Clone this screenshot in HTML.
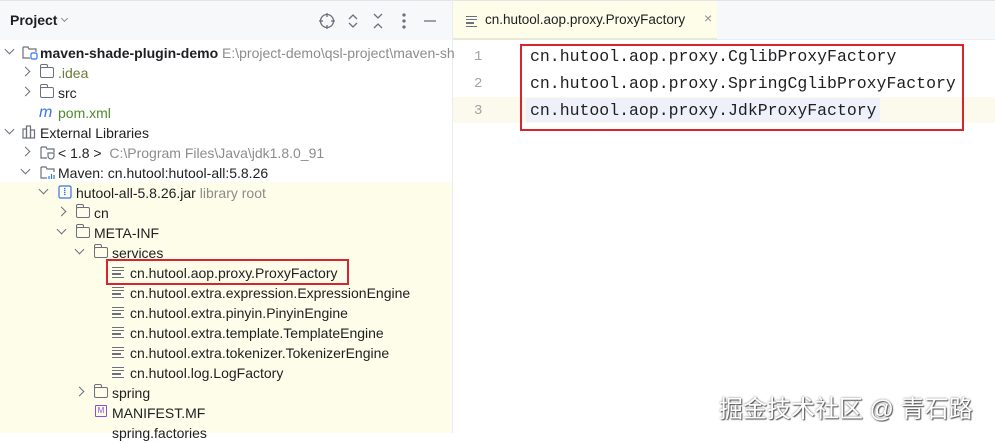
<!DOCTYPE html>
<html><head><meta charset="utf-8"><style>
*{margin:0;padding:0;box-sizing:border-box}
body{width:995px;height:433px;overflow:hidden;background:#fff;font-family:"Liberation Sans","Noto Sans CJK SC",sans-serif;font-size:14px;color:#1e1f22;position:relative}
.abs{position:absolute}
.row{position:absolute;height:20px;line-height:20px;white-space:nowrap;margin-top:1px}
.chev{position:absolute;width:7px;height:7px;border-right:1.3px solid #6c707e;border-bottom:1.3px solid #6c707e}
.cr{transform:rotate(-45deg)}
.cd{transform:rotate(45deg)}
.fold{position:absolute;width:14px;height:11px;border:1.2px solid #6c707e;border-radius:2px;top:5px}
.fold:before{content:"";position:absolute;left:-1px;top:-4px;width:6px;height:3px;border:1.2px solid #6c707e;border-bottom:none;border-radius:2px 2px 0 0}
.lines{position:absolute;width:12px;top:6px}
.lines i{display:block;height:1.2px;background:#6c707e;margin-bottom:2px}
.grey{color:#8c8c8c}
.code{font-family:"Liberation Mono","DejaVu Sans Mono",monospace;font-size:16.5px;position:absolute;left:530px;white-space:nowrap}
.ln{font-family:"Liberation Mono",monospace;font-size:14px;color:#a0a3a9;position:absolute;left:474px}
</style></head><body>
<div class="abs" style="left:0;top:0;width:452px;height:40px;background:#f7f8fa;border-top:1px solid #e4e4e4"></div>
<div class="abs" style="left:10px;top:12px;font-size:14px;font-weight:bold;color:#1e1f22">Project</div>
<div class="chev cd abs" style="left:62px;top:16px;width:5px;height:5px;border-color:#8c8c8c"></div>
<svg class="abs" style="left:316px;top:11px" width="120" height="20" fill="none" stroke="#6c707e" stroke-width="1.3">
<circle cx="11" cy="10" r="6.5"/><line x1="11" y1="2" x2="11" y2="6"/><line x1="11" y1="14" x2="11" y2="18"/><line x1="3" y1="10" x2="7" y2="10"/><line x1="15" y1="10" x2="19" y2="10"/>
<path d="M33 8l4-4 4 4M33 12l4 4 4-4"/>
<path d="M58 3l4 4 4-4M58 17l4-4 4 4"/>
<circle cx="88" cy="4" r="1" fill="#6c707e"/><circle cx="88" cy="10" r="1" fill="#6c707e"/><circle cx="88" cy="16" r="1" fill="#6c707e"/>
<line x1="108" y1="10" x2="120" y2="10"/>
</svg>
<div class="abs" style="left:0;top:182px;width:452px;height:251px;background:#fdfde9"></div>
<div class="abs" style="left:452px;top:0;width:1px;height:433px;background:#ebecf0"></div>

<div class="chev cd" style="left:6px;top:46px"></div>
<svg class="abs" style="left:22px;top:44px" width="16" height="16" fill="none" stroke="#6c707e" stroke-width="1.2"><path d="M1 3h5l1 2h7v3M1 3v11h7"/><rect x="9" y="9" width="6" height="6" rx="1.5" stroke="#3574f0"/></svg>
<div class="row" style="left:40px;top:42px"><b>maven-shade-plugin-demo</b> <span class="grey">E:\project-demo\qsl-project\maven-sh</span></div>

<div class="chev cr" style="left:22px;top:68px"></div>
<div class="fold" style="left:40px;top:67px"></div>
<div class="row" style="left:58px;top:62px;color:#6b7d38">.idea</div>
<div class="chev cr" style="left:22px;top:88px"></div>
<div class="fold" style="left:40px;top:87px"></div>
<div class="row" style="left:58px;top:82px">src</div>
<div class="row" style="left:39px;top:102px;color:#3574f0;font-style:italic;font-size:16px">m</div>
<div class="row" style="left:58px;top:102px;color:#4e8a2e">pom.xml</div>

<div class="chev cd" style="left:6px;top:126px"></div>
<svg class="abs" style="left:22px;top:125px" width="14" height="14" fill="none" stroke="#6c707e" stroke-width="1.2"><rect x="1" y="4" width="3.5" height="9"/><rect x="4.5" y="1" width="4" height="12"/><rect x="8.5" y="5" width="4" height="8"/></svg>
<div class="row" style="left:40px;top:122px">External Libraries</div>

<div class="chev cr" style="left:22px;top:148px"></div>
<svg class="abs" style="left:40px;top:144px" width="16" height="16" fill="none" stroke="#6c707e" stroke-width="1.2"><path d="M1 3h5l1 2h7v3M1 3v11h6"/><path d="M8 9h6v3a3 3 0 0 1-6 0z"/></svg>
<div class="row" style="left:58px;top:142px">&lt; 1.8 &gt; <span class="grey">&nbsp;C:\Program Files\Java\jdk1.8.0_91</span></div>

<div class="chev cd" style="left:22px;top:166px"></div>
<svg class="abs" style="left:40px;top:164px" width="16" height="16" fill="none" stroke="#6c707e" stroke-width="1.2"><path d="M1 3h5l1 2h7v3M1 3v11h6"/><path d="M9 15v-3M11.5 15v-5M14 15v-4" stroke="#3574f0"/></svg>
<div class="row" style="left:58px;top:162px">Maven: cn.hutool:hutool-all:5.8.26</div>

<div class="chev cd" style="left:40px;top:186px"></div>
<svg class="abs" style="left:58px;top:185px" width="14" height="14" fill="none" stroke="#3574f0" stroke-width="1.2"><rect x="1" y="1" width="12" height="12" rx="1.5"/><path d="M6 3.5h1.5M7.5 5.5h-1.5M6 7.5h1.5M7.5 9.5h-1.5"/></svg>
<div class="row" style="left:76px;top:182px">hutool-all-5.8.26.jar <span class="grey">library root</span></div>

<div class="chev cr" style="left:58px;top:208px"></div>
<div class="fold" style="left:76px;top:207px"></div>
<div class="row" style="left:94px;top:202px">cn</div>
<div class="chev cd" style="left:58px;top:226px"></div>
<div class="fold" style="left:76px;top:227px"></div>
<div class="row" style="left:94px;top:222px">META-INF</div>
<div class="chev cd" style="left:76px;top:246px"></div>
<div class="fold" style="left:94px;top:247px"></div>
<div class="row" style="left:112px;top:242px">services</div>

<div class="lines" style="left:112px;top:267px"><i></i><i></i><i style="width:9px"></i><i></i></div>
<div class="row" style="left:130px;top:262px">cn.hutool.aop.proxy.ProxyFactory</div>
<div class="lines" style="left:112px;top:287px"><i></i><i></i><i style="width:9px"></i><i></i></div>
<div class="row" style="left:130px;top:282px">cn.hutool.extra.expression.ExpressionEngine</div>
<div class="lines" style="left:112px;top:307px"><i></i><i></i><i style="width:9px"></i><i></i></div>
<div class="row" style="left:130px;top:302px">cn.hutool.extra.pinyin.PinyinEngine</div>
<div class="lines" style="left:112px;top:327px"><i></i><i></i><i style="width:9px"></i><i></i></div>
<div class="row" style="left:130px;top:322px">cn.hutool.extra.template.TemplateEngine</div>
<div class="lines" style="left:112px;top:347px"><i></i><i></i><i style="width:9px"></i><i></i></div>
<div class="row" style="left:130px;top:342px">cn.hutool.extra.tokenizer.TokenizerEngine</div>
<div class="lines" style="left:112px;top:367px"><i></i><i></i><i style="width:9px"></i><i></i></div>
<div class="row" style="left:130px;top:362px">cn.hutool.log.LogFactory</div>

<div class="chev cr" style="left:76px;top:388px"></div>
<div class="fold" style="left:94px;top:387px"></div>
<div class="row" style="left:112px;top:382px">spring</div>
<div class="abs" style="left:95px;top:405px;width:12px;height:12px;border:1.2px solid #8a4fd0;border-radius:1px;font-size:8px;line-height:10px;text-align:center;color:#8a4fd0">M</div>
<div class="row" style="left:112px;top:402px">MANIFEST.MF</div>
<div class="row" style="left:112px;top:422px">spring.factories</div>

<div class="abs" style="left:106px;top:259px;width:243px;height:26px;border:2px solid #d9232e"></div>

<div class="abs" style="left:453px;top:0;width:542px;height:40px;background:#f7f8fa;border-top:1px solid #e4e4e4;border-bottom:1px solid #ebecf0"></div>
<div class="abs" style="left:453px;top:1px;width:264px;height:39px;background:#fdfde9;border-bottom:2px solid #e8e8d8"></div>
<div class="lines" style="left:466px;top:16px;width:11px"><i></i><i></i><i style="width:8px"></i><i></i></div>
<div class="abs" style="left:485px;top:12px;font-size:13.5px">cn.hutool.aop.proxy.ProxyFactory</div>
<div class="abs" style="left:704px;top:10px;color:#8c8c8c;font-size:14px">×</div>
<div class="abs" style="left:453px;top:97px;width:542px;height:26px;background:#fcfaed"></div>
<div class="abs" style="left:526px;top:98px;width:354px;height:24px;background:#eef0fa"></div>
<div class="ln" style="top:49px">1</div>
<div class="ln" style="top:76px">2</div>
<div class="ln" style="top:103px">3</div>
<div class="code" style="top:47px">cn.hutool.aop.proxy.CglibProxyFactory</div>
<div class="code" style="top:74px">cn.hutool.aop.proxy.SpringCglibProxyFactory</div>
<div class="code" style="top:101px">cn.hutool.aop.proxy.JdkProxyFactory</div>
<div class="abs" style="left:520px;top:44px;width:444px;height:87px;border:2px solid #d9232e"></div>

<div class="abs" style="left:719px;top:389px;font-size:24px;color:#fff;text-shadow:1px 1px 1px #555,0 0 2px #777;font-family:'Liberation Sans','Noto Sans CJK SC',sans-serif;white-space:nowrap">掘金技术社区 @ 青石路</div>
</body></html>
